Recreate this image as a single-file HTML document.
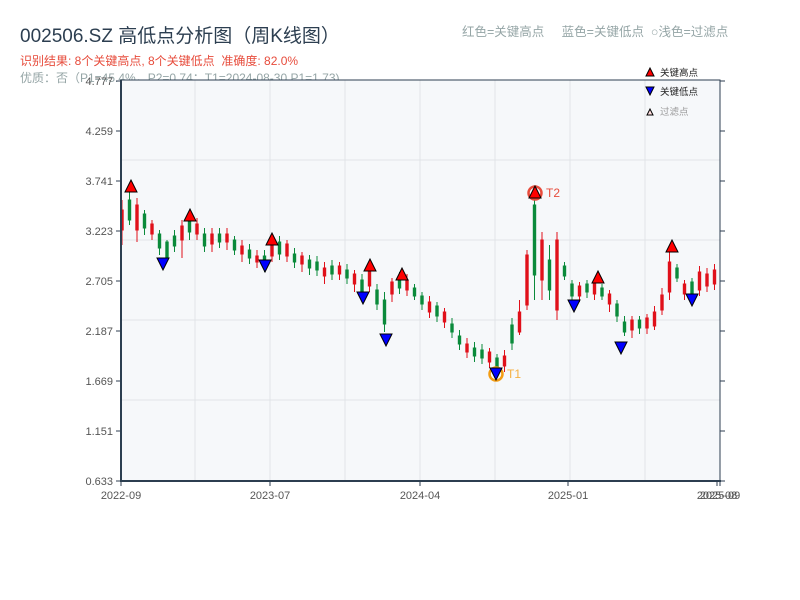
<!DOCTYPE html>
<html><head><meta charset="utf-8">
<style>
body{margin:0;width:800px;height:600px;background:#fff;font-family:"Liberation Sans","Noto Sans CJK SC",sans-serif;overflow:hidden;position:relative}
.t{position:absolute;white-space:nowrap}
</style></head><body>
<div class="t" style="left:20px;top:21px;font-size:19px;color:#2c3e50">002506.SZ 高低点分析图（周K线图）</div>
<div class="t" style="left:20px;top:52px;font-size:12px;color:#e74c3c">识别结果: 8个关键高点, 8个关键低点&nbsp;&nbsp;准确度: 82.0%</div>
<div class="t" style="left:20px;top:69px;font-size:12px;color:#95a5a6">优质：否（P1=45.4%，P2=0.74；T1=2024-08-30 P1=1.73)</div>
<div class="t" style="left:462px;top:21px;font-size:12.5px;color:#95a5a6">红色=关键高点&nbsp;&nbsp;&nbsp;&nbsp;&nbsp;蓝色=关键低点&nbsp;&nbsp;○浅色=过滤点</div>
<svg width="800" height="600" style="position:absolute;left:0;top:0" font-family="Liberation Sans, Noto Sans CJK SC, sans-serif">
<rect x="121" y="80" width="599" height="401" fill="#f6f8fa"/>
<g stroke="#e1e4e8">
<line x1="195" y1="80" x2="195" y2="481"/><line x1="270" y1="80" x2="270" y2="481"/><line x1="345" y1="80" x2="345" y2="481"/><line x1="420" y1="80" x2="420" y2="481"/><line x1="495" y1="80" x2="495" y2="481"/><line x1="570" y1="80" x2="570" y2="481"/><line x1="645" y1="80" x2="645" y2="481"/>
<line x1="121" y1="160" x2="720" y2="160"/><line x1="121" y1="240" x2="720" y2="240"/><line x1="121" y1="320" x2="720" y2="320"/><line x1="121" y1="400" x2="720" y2="400"/>
</g>
<g stroke="#e0101a" stroke-width="1" fill="#e0101a">
<path d="M122 200V245M137 198V242M152 220V240M182 220V258M197 218V240M212 228V252M227 228V250M242 240V262M257 250V268M272 238V262M287 240V262M302 252V272M324.5 262V284M339.5 262V280M354.5 270V292M369.5 262V292M392 278V302M407 274V296M429.5 296V318M444.5 308V328M467 338V358M489.5 348V368M504.5 350V372M519.5 300V335M527 250V310M542 232V300M557 232V320M579.5 282V302M594.5 280V300M609.5 290V312M632 316V338M647 314V334M654.5 306V330M662 288V315M669.5 248V300M684.5 280V300M699.5 266V296M707 268V292M714.5 264V290"/>
<rect x="120.8" y="210" width="2.4" height="20"/><rect x="135.8" y="205" width="2.4" height="25"/><rect x="150.8" y="224" width="2.4" height="10"/><rect x="180.8" y="226" width="2.4" height="14"/><rect x="195.8" y="224" width="2.4" height="10"/><rect x="210.8" y="234" width="2.4" height="10"/><rect x="225.8" y="234" width="2.4" height="8"/><rect x="240.8" y="246" width="2.4" height="8"/><rect x="255.8" y="256" width="2.4" height="6"/><rect x="270.8" y="246" width="2.4" height="10"/><rect x="285.8" y="244" width="2.4" height="12"/><rect x="300.8" y="256" width="2.4" height="8"/><rect x="323.3" y="268" width="2.4" height="8"/><rect x="338.3" y="266" width="2.4" height="8"/><rect x="353.3" y="274" width="2.4" height="10"/><rect x="368.3" y="270" width="2.4" height="16"/><rect x="390.8" y="282" width="2.4" height="12"/><rect x="405.8" y="280" width="2.4" height="10"/><rect x="428.3" y="302" width="2.4" height="10"/><rect x="443.3" y="312" width="2.4" height="10"/><rect x="465.8" y="344" width="2.4" height="8"/><rect x="488.3" y="352" width="2.4" height="10"/><rect x="503.3" y="356" width="2.4" height="10"/><rect x="518.3" y="312" width="2.4" height="20"/><rect x="525.8" y="255" width="2.4" height="50"/><rect x="540.8" y="240" width="2.4" height="40"/><rect x="555.8" y="240" width="2.4" height="70"/><rect x="578.3" y="286" width="2.4" height="10"/><rect x="593.3" y="284" width="2.4" height="10"/><rect x="608.3" y="294" width="2.4" height="10"/><rect x="630.8" y="320" width="2.4" height="10"/><rect x="645.8" y="318" width="2.4" height="10"/><rect x="653.3" y="312" width="2.4" height="14"/><rect x="660.8" y="295" width="2.4" height="15"/><rect x="668.3" y="262" width="2.4" height="30"/><rect x="683.3" y="284" width="2.4" height="10"/><rect x="698.3" y="272" width="2.4" height="18"/><rect x="705.8" y="274" width="2.4" height="12"/><rect x="713.3" y="270" width="2.4" height="14"/>
</g>
<g stroke="#0a8a3a" stroke-width="1" fill="#0a8a3a">
<path d="M129.5 190V225M144.5 210V235M159.5 230V255M167 240V262M174.5 230V252M189.5 210V240M204.5 228V252M219.5 228V248M234.5 236V255M249.5 244V264M264.5 250V272M279.5 236V260M294.5 248V268M309.5 255V275M317 256V276M332 260V280M347 264V284M362 274V300M377 284V310M384.5 292V332M399.5 272V294M414.5 284V300M422 292V310M437 302V322M452 318V338M459.5 330V350M474.5 342V362M482 344V364M497 354V374M512 318V350M534.5 200V300M549.5 245V300M564.5 262V280M572 280V300M587 280V298M602 284V300M617 300V322M624.5 316V336M639.5 316V334M677 264V282M692 278V300"/>
<rect x="128.3" y="200" width="2.4" height="20"/><rect x="143.3" y="214" width="2.4" height="14"/><rect x="158.3" y="234" width="2.4" height="14"/><rect x="165.8" y="242" width="2.4" height="16"/><rect x="173.3" y="236" width="2.4" height="10"/><rect x="188.3" y="218" width="2.4" height="14"/><rect x="203.3" y="234" width="2.4" height="12"/><rect x="218.3" y="234" width="2.4" height="8"/><rect x="233.3" y="240" width="2.4" height="10"/><rect x="248.3" y="250" width="2.4" height="8"/><rect x="263.3" y="256" width="2.4" height="8"/><rect x="278.3" y="242" width="2.4" height="12"/><rect x="293.3" y="254" width="2.4" height="8"/><rect x="308.3" y="260" width="2.4" height="8"/><rect x="315.8" y="262" width="2.4" height="8"/><rect x="330.8" y="266" width="2.4" height="8"/><rect x="345.8" y="270" width="2.4" height="8"/><rect x="360.8" y="280" width="2.4" height="12"/><rect x="375.8" y="290" width="2.4" height="14"/><rect x="383.3" y="300" width="2.4" height="24"/><rect x="398.3" y="278" width="2.4" height="10"/><rect x="413.3" y="288" width="2.4" height="8"/><rect x="420.8" y="296" width="2.4" height="8"/><rect x="435.8" y="306" width="2.4" height="10"/><rect x="450.8" y="324" width="2.4" height="8"/><rect x="458.3" y="336" width="2.4" height="8"/><rect x="473.3" y="348" width="2.4" height="8"/><rect x="480.8" y="350" width="2.4" height="8"/><rect x="495.8" y="358" width="2.4" height="10"/><rect x="510.8" y="325" width="2.4" height="18"/><rect x="533.3" y="205" width="2.4" height="70"/><rect x="548.3" y="260" width="2.4" height="30"/><rect x="563.3" y="266" width="2.4" height="10"/><rect x="570.8" y="284" width="2.4" height="12"/><rect x="585.8" y="284" width="2.4" height="8"/><rect x="600.8" y="288" width="2.4" height="8"/><rect x="615.8" y="304" width="2.4" height="12"/><rect x="623.3" y="322" width="2.4" height="10"/><rect x="638.3" y="320" width="2.4" height="8"/><rect x="675.8" y="268" width="2.4" height="10"/><rect x="690.8" y="282" width="2.4" height="12"/>
</g>
<circle cx="535" cy="193" r="6.5" fill="none" stroke="#e74c3c" stroke-width="2.5"/><text x="546" y="197" font-size="12" fill="#e74c3c">T2</text>
<circle cx="496" cy="374" r="6.5" fill="none" stroke="#f39c12" stroke-width="2.5"/><text x="507" y="378" font-size="12" fill="#f5b041">T1</text>
<g fill="#f00" stroke="#000" stroke-width="1">
<polygon points="125,192 137,192 131,180"/><polygon points="184,221 196,221 190,209"/><polygon points="266,245 278,245 272,233"/><polygon points="364,271 376,271 370,259"/><polygon points="396,280 408,280 402,268"/><polygon points="529,198 541,198 535,186"/><polygon points="592,283 604,283 598,271"/><polygon points="666,252 678,252 672,240"/>
</g>
<g fill="#00f" stroke="#000" stroke-width="1">
<polygon points="157,258 169,258 163,270"/><polygon points="259,260 271,260 265,272"/><polygon points="357,292 369,292 363,304"/><polygon points="380,334 392,334 386,346"/><polygon points="490,368 502,368 496,380"/><polygon points="568,300 580,300 574,312"/><polygon points="615,342 627,342 621,354"/><polygon points="686,294 698,294 692,306"/>
</g>
<rect x="121" y="80" width="599" height="401" fill="none" stroke="#2c3e50" stroke-width="1"/>
<line x1="121" y1="80" x2="121" y2="482" stroke="#2c3e50" stroke-width="2"/><line x1="120" y1="481" x2="721" y2="481" stroke="#2c3e50" stroke-width="2"/>
<g stroke="#2c3e50">
<path d="M116 81H121M116 131H121M116 181H121M116 231H121M116 281H121M116 331H121M116 381H121M116 431H121M116 481H121M720 81H725M720 131H725M720 181H725M720 231H725M720 281H725M720 331H725M720 381H725M720 431H725M720 481H725M121 481V486M270 481V486M420 481V486M568 481V486M717 481V486M720 481V486"/>
</g>
<g font-size="11" fill="#555" text-anchor="end">
<text x="113" y="85">4.777</text><text x="113" y="135">4.259</text><text x="113" y="185">3.741</text><text x="113" y="235">3.223</text><text x="113" y="285">2.705</text><text x="113" y="335">2.187</text><text x="113" y="385">1.669</text><text x="113" y="435">1.151</text><text x="113" y="485">0.633</text>
</g>
<g font-size="11" fill="#555" text-anchor="middle">
<text x="121" y="499">2022-09</text><text x="270" y="499">2023-07</text><text x="420" y="499">2024-04</text><text x="568" y="499">2025-01</text><text x="717" y="499">2025-08</text><text x="720" y="499">2025-09</text>
</g>
<polygon points="646,76 654,76 650,68" fill="#f00" stroke="#000"/><text x="660" y="76" font-size="9.5" fill="#222">关键高点</text>
<polygon points="646,87 654,87 650,95" fill="#00f" stroke="#000"/><text x="660" y="95" font-size="9.5" fill="#222">关键低点</text>
<polygon points="647,115 653,115 650,109" fill="#fdd" stroke="#000"/><text x="660" y="115" font-size="9.5" fill="#999">过滤点</text>
</svg>
</body></html>
